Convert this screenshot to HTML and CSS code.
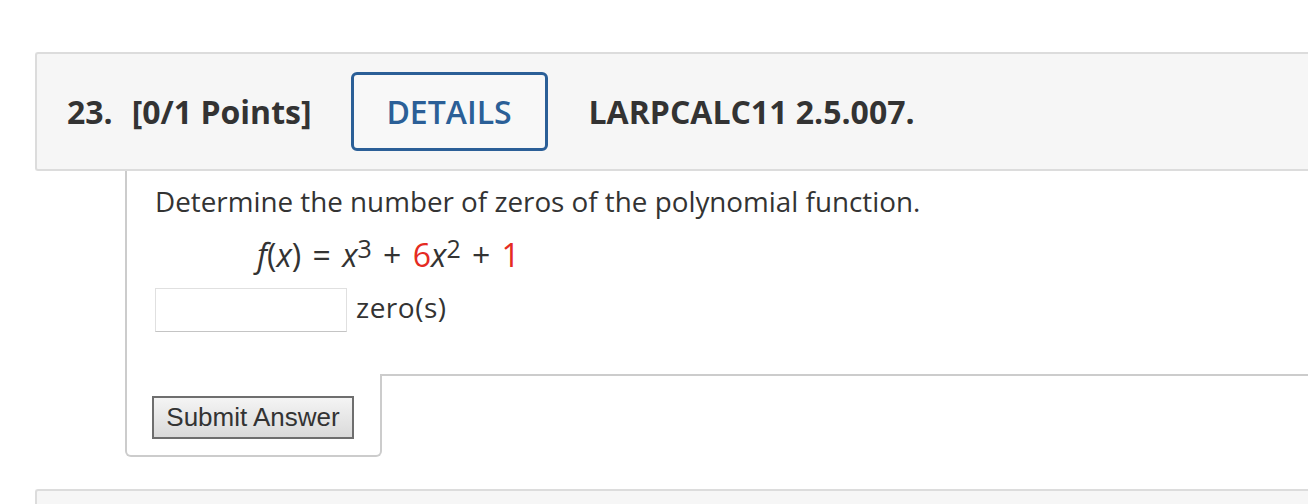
FILE: index.html
```html
<!DOCTYPE html>
<html lang="en">
<head>
  <meta charset="UTF-8" />
  <meta name="viewport" content="width=device-width, initial-scale=1.0"/>
  <title>Question 23</title>
  <link rel="stylesheet" href="styles.css">
</head>
<body>

  <div class="question">
    <div class="q-header">
      <span class="q-num">23.</span>
      <span class="q-points">[0/1 Points]</span>
      <button class="details-btn">DETAILS</button>
      <span class="q-code">LARPCALC11 2.5.007.</span>
    </div>

    <div class="panel">
      <div class="panel-body">
        <p class="prompt">Determine the number of zeros of the polynomial function.</p>
        <p class="formula"><i>f</i>(<i>x</i>) = <i>x</i><sup>3</sup> + <span class="red">6</span><i>x</i><sup>2</sup> + <span class="red">1</span></p>
        <div class="answer-row">
          <input type="text" class="answer-input" />
          <span class="unit">zero(s)</span>
        </div>
      </div>
      <div class="panel-foot">
        <div class="submit-cell">
          <button class="submit-btn">Submit Answer</button>
        </div>
        <div class="foot-rest"></div>
      </div>
    </div>
  </div>

  <div class="question">
    <div class="q-header"></div>
  </div>

</body>
</html>
```

FILE: styles.css
```css
body {
  margin: 0;
  padding: 52px 0 0 35px;
  overflow: hidden;
  background: #fff;
  color: #333;
  font-family: "Open Sans", Arial, sans-serif;
}

.question {
  margin-right: -20px;
}

.q-header {
  background: #f6f6f6;
  border: 2px solid #dcdcdc;
  border-right: none;
  border-radius: 3px 0 0 3px;
  height: 115px;
  display: flex;
  align-items: center;
  padding-left: 30px;
  font-size: 32px;
  font-weight: bold;
  color: #333;
}

.q-points {
  margin-left: 19px;
}

.details-btn {
  margin-left: 39px;
  width: 197px;
  height: 79px;
  border: 3px solid #2b5f97;
  border-radius: 6px;
  background: #f8f8f8;
  color: #2b5f97;
  font-family: "Open Sans", Arial, sans-serif;
  font-size: 32px;
  font-weight: 600;
  padding: 0;
}

.q-code {
  margin-left: 41px;
}

.panel {
  margin-left: 90px;
}

.panel-body {
  border-left: 2px solid #ccc;
  padding: 11px 0 42px 28px;
  font-size: 28px;
}

.prompt {
  margin: 0;
  line-height: 38px;
  font-size: 27.8px;
}

.formula {
  margin: 13px 0 0 102px;
  font-size: 32px;
  line-height: 44px;
  word-spacing: 3px;
}

.formula sup {
  font-size: 25px;
  line-height: 0;
  vertical-align: 9px;
}

.red {
  color: #e52b22;
}

.answer-row {
  display: flex;
  align-items: flex-start;
  gap: 9px;
  margin-top: 11px;
}

.answer-input {
  width: 192px;
  height: 44px;
  box-sizing: border-box;
  margin: 0;
  border: 1px solid #e0e0e0;
  border-bottom-color: #c4c4c4;
  background: #fff;
}

.unit {
  line-height: 38px;
  letter-spacing: 0.5px;
}

.panel-foot {
  display: flex;
}

.submit-cell {
  border: 2px solid #ccc;
  border-top: none;
  border-radius: 0 0 6px 6px;
  padding: 22px 26px 16px 25px;
}

.submit-btn {
  display: block;
  width: 202px;
  height: 43px;
  box-sizing: border-box;
  border: 2px solid #6e6e6e;
  background: linear-gradient(#f4f4f4, #dadada);
  color: #333;
  font-family: "Liberation Sans", Arial, sans-serif;
  font-size: 26px;
  padding: 0;
}

.foot-rest {
  flex: 1;
  border-top: 2px solid #ccc;
}

.question + .question {
  margin-top: 32px;
}
```
